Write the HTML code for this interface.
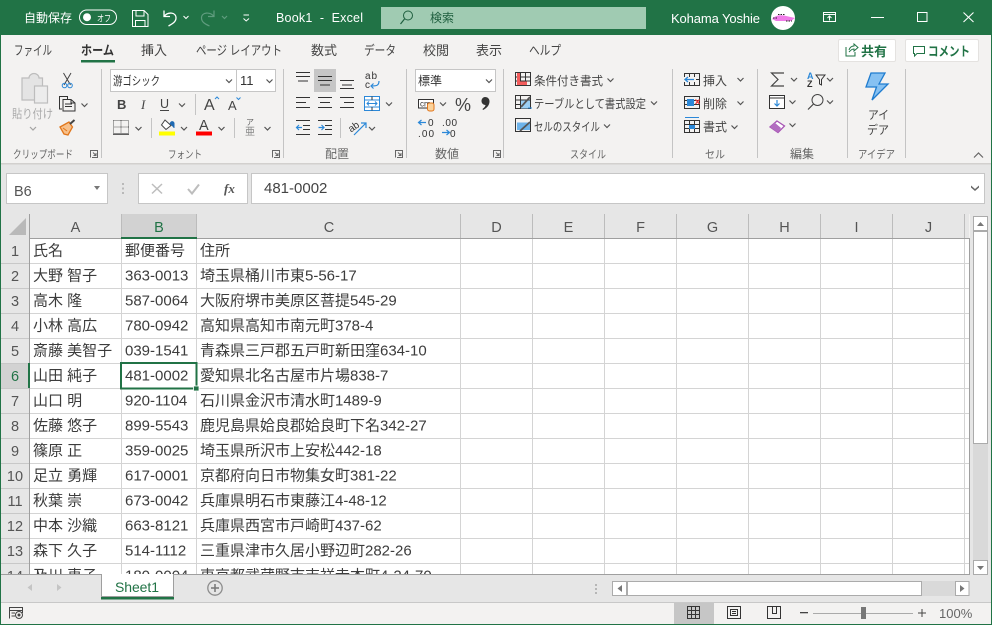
<!DOCTYPE html>
<html lang="ja"><head><meta charset="utf-8"><title>Book1 - Excel</title>
<style>
html,body{margin:0;padding:0;width:992px;height:625px;overflow:hidden;background:#fff}
svg{display:block}
text{font-family:"Liberation Sans","Noto Sans CJK JP",sans-serif;fill:#444;font-size:12px}
.t text{font-size:15px;fill:#3c3c3c}
.g text{font-size:11px;fill:#666}
.r text{font-size:12px;fill:#444}
.n text{font-size:14.5px;fill:#555;text-anchor:middle}
.tab text{font-size:13px;fill:#444}
</style></head><body>
<svg width="992" height="625" viewBox="0 0 992 625" xmlns="http://www.w3.org/2000/svg">
<defs><path id="c" d="M-3 -1.5L0 1.5L3 -1.5" fill="none" stroke="#555" stroke-width="1.2"/></defs>
<rect width="992" height="625" fill="#f3f2f1"/>
<!-- title bar -->
<rect width="992" height="35" fill="#217346"/>
<text x="24" y="22" style="fill:#fff;font-size:12px">自動保存</text>
<rect x="79.5" y="10" width="37" height="14.5" rx="7.2" fill="none" stroke="#fff"/>
<circle cx="87" cy="17.2" r="4" fill="#fff"/>
<text x="97" y="21.5" textLength="14" lengthAdjust="spacingAndGlyphs" style="fill:#fff;font-size:9px">オフ</text>
<g fill="none" stroke="#fff" stroke-width="1">
<path d="M132.5 10.500H144L148 14.500V26.500H132.500Z"/><path d="M136 10.500V16H144V10.500M135.500 26.500V20.500H145V26.500"/>
<path d="M164 10.500V16.500H170M164 16.500C168 11.500 176 12 176 18C176 22 172 24 168.500 26" stroke-width="1.3"/>
<path d="M183.500 16L186 18.500L188.500 16"/>
<path d="M243.500 15H249M243.500 18.500L246.200 21L249 18.500"/>
</g>
<g fill="none" stroke="#5f9c7e" stroke-width="1.2"><path d="M214 10.500V16.500H208M214 16.500C210 11.500 201.500 12 201.500 18C201.500 22 205 24 209.500 26"/><path d="M222 16L224.500 18.500L227 16"/></g>
<text x="276" y="22" textLength="87" style="fill:#fff;font-size:12.500px" xml:space="preserve">Book1  -  Excel</text>
<rect x="381" y="7" width="265" height="22" fill="#a0cbb2"/>
<circle cx="408" cy="15.500" r="4.500" fill="none" stroke="#1f5f3f"/><path d="M404.500 19L400.500 24" stroke="#1f5f3f" stroke-width="1.200"/>
<text x="430" y="22" style="fill:#1f5f3f;font-size:12px">検索</text>
<text x="671" y="23" textLength="89" style="fill:#fff;font-size:13px">Kohama Yoshie</text>
<circle cx="783" cy="18" r="12" fill="#fff"/>
<path d="M772 19C776 15 780 15 784 15.500L795 18L791 21H776Z" fill="#f07ae8"/><path d="M773 18H778M778 14.500H785M786 21H792" stroke="#222" stroke-dasharray="1.500 1"/>
<g fill="none" stroke="#fff"><rect x="823.500" y="12.500" width="12" height="9"/><path d="M823.500 14.500H835.500M829.500 20.500V16M827.500 18L829.500 16L831.500 18"/>
<path d="M871 17.500H884"/><rect x="917.500" y="12.500" width="9.500" height="9"/><path d="M963.500 12.500L973.500 22M973.500 12.500L963.500 22" stroke-width="1.100"/></g>
<!-- tabs -->
<g class="tab">
<text x="14" y="55" textLength="38" lengthAdjust="spacingAndGlyphs">ファイル</text>
<text x="81" y="55" textLength="33" lengthAdjust="spacingAndGlyphs" style="font-weight:bold;fill:#333">ホーム</text>
<text x="141" y="55">挿入</text>
<text x="196" y="55" textLength="86" lengthAdjust="spacingAndGlyphs">ページ レイアウト</text>
<text x="311" y="55">数式</text>
<text x="364" y="55" textLength="32" lengthAdjust="spacingAndGlyphs">データ</text>
<text x="423" y="55">校閲</text>
<text x="476" y="55">表示</text>
<text x="529" y="55" textLength="32" lengthAdjust="spacingAndGlyphs">ヘルプ</text>
</g>
<rect x="81" y="60" width="34" height="2.500" fill="#217346"/>
<rect x="838.500" y="39.500" width="57" height="22" rx="1.500" fill="#fff" stroke="#e4e2e0"/>
<rect x="905.500" y="39.500" width="73" height="22" rx="1.500" fill="#fff" stroke="#e4e2e0"/>
<path d="M846 47V56H855V52M849 50C850 47 852 46 854 46V44L858 47.500L854 51V49C852 49 851 50 849 52" fill="none" stroke="#217346"/>
<path d="M913.500 46.500H924.500V53.500H917L914.500 56V53.500H913.500Z" fill="none" stroke="#217346"/>
<text x="861" y="56" style="font-size:13px;font-weight:bold;fill:#217346">共有</text>
<text x="928" y="56" textLength="42" lengthAdjust="spacingAndGlyphs" style="font-size:13px;font-weight:bold;fill:#217346">コメント</text>
<!-- ribbon separators -->
<g fill="#c4c4c4"><rect x="101" y="69" width="1" height="89"/><rect x="283" y="69" width="1" height="89"/><rect x="406" y="69" width="1" height="89"/><rect x="503" y="69" width="1" height="89"/><rect x="672" y="69" width="1" height="89"/><rect x="757" y="69" width="1" height="89"/><rect x="847" y="69" width="1" height="89"/><rect x="905" y="69" width="1" height="89"/>
<rect x="195" y="94" width="1" height="21"/><rect x="151" y="118" width="1" height="20"/><rect x="234" y="118" width="1" height="20"/><rect x="340" y="118" width="1" height="20"/></g>
<!-- group labels -->
<g class="g">
<text x="13" y="158" textLength="60" lengthAdjust="spacingAndGlyphs">クリップボード</text>
<text x="168" y="158" textLength="34" lengthAdjust="spacingAndGlyphs">フォント</text>
<text x="325" y="158" style="font-size:12px">配置</text>
<text x="435" y="158" style="font-size:12px">数値</text>
<text x="570" y="158" textLength="36" lengthAdjust="spacingAndGlyphs">スタイル</text>
<text x="705" y="158" textLength="20" lengthAdjust="spacingAndGlyphs">セル</text>
<text x="790" y="158" style="font-size:12px">編集</text>
<text x="858" y="158" textLength="37" lengthAdjust="spacingAndGlyphs">アイデア</text>
</g>
<g fill="none" stroke="#666"><path d="M90.500 157.500V150.500H97.500V157.500H92M93 152.500L96 155.500M96 153V155.500H93.500"/>
<path d="M272.500 157.500V150.500H279.500V157.500H274M275 152.500L278 155.500M278 153V155.500H275.500"/>
<path d="M395.500 157.500V150.500H402.500V157.500H397M398 152.500L401 155.500M401 153V155.500H398.500"/>
<path d="M493.500 157.500V150.500H500.500V157.500H495M496 152.500L499 155.500M499 153V155.500H496.500"/>
<path d="M974 157.500L978.500 153L983 157.500" stroke-width="1.200"/></g>
<!-- clipboard -->
<g fill="#f3f2f1" stroke="#bdbdbd" stroke-width="1.200"><path d="M22 78H29C29 75 32 73.500 34 73.500C36 73.500 39 75 39 78H42.500V100H22Z" fill="#e4e4e4"/><rect x="34.500" y="86" width="13" height="17" fill="#ececec"/></g>
<text x="12" y="118" textLength="41" lengthAdjust="spacingAndGlyphs" style="fill:#aaa;font-size:12px">貼り付け</text>
<use href="#c" x="33" y="128.500" style="opacity:.5"/>
<path d="M63.500 73L70.500 85M71 73L64 85" stroke="#444" fill="none"/><circle cx="64.500" cy="85.500" r="2.300" fill="none" stroke="#2b88d8"/><circle cx="70" cy="85.500" r="2.300" fill="none" stroke="#2b88d8"/>
<path d="M62 109H59.500V96.500H67.500V99M63 99.500H71L75 103V111H63Z M71 99.500V103H75M65 104H72M65 106.500H72" fill="none" stroke="#333"/>
<use href="#c" x="84.500" y="105"/>
<path d="M60 127L69 122L72.500 127L68 135L64 134L60 127Z" fill="#f7c08a" stroke="#e1761b" stroke-width="1.300"/><path d="M70 124L74.500 120" stroke="#444" stroke-width="2"/><path d="M63 128L67 131" stroke="#e1761b"/>
<!-- font boxes -->
<rect x="110.500" y="69.500" width="126" height="22" fill="#fff" stroke="#c6c6c6"/><rect x="236.500" y="69.500" width="39" height="22" fill="#fff" stroke="#c6c6c6"/>
<text x="113" y="85" textLength="47" lengthAdjust="spacingAndGlyphs" style="font-size:12px;fill:#333">游ゴシック</text>
<text x="240" y="85" style="font-size:13px;fill:#333">11</text>
<use href="#c" x="229" y="81"/><use href="#c" x="269.500" y="81"/>
<text x="117" y="109" style="font-size:13px;font-weight:bold">B</text>
<text x="141" y="109" style="font-size:13px;font-style:italic;font-family:'Liberation Serif',serif">I</text>
<text x="160" y="108" style="font-size:12.500px">U</text><rect x="160" y="110" width="9" height="1" fill="#444"/>
<use href="#c" x="182" y="105"/>
<text x="204" y="110" style="font-size:16px">A</text><path d="M215 99L217 97L219 99" fill="none" stroke="#2b88d8"/>
<text x="228" y="110" style="font-size:13px">A</text><path d="M236.500 97.500L238.500 99.500L240.500 97.500" fill="none" stroke="#2b88d8"/>
<path d="M113.500 120.500H128.500V133M113.500 120.500V133M121 120.500V133M113.500 127H128.500" fill="none" stroke="#555" stroke-dasharray="1 1"/><rect x="113" y="133.500" width="16" height="1.200" fill="#222"/>
<use href="#c" x="138.500" y="128.500"/>
<path d="M165 120L161.500 125L166 129.500L171 125.500L165 120Z" fill="#fff" stroke="#444"/><path d="M170 124C171 121 173 121 174 123V128" fill="#1f6ab3" stroke="#1f6ab3"/>
<rect x="159" y="131.500" width="16" height="4" fill="#ffff00"/><use href="#c" x="184" y="128.500"/>
<text x="199" y="130" style="font-size:14.500px">A</text><rect x="196" y="131.500" width="16" height="4" fill="#f00"/><use href="#c" x="221.500" y="128.500"/>
<text x="246" y="125" style="font-size:8px;fill:#666">ア</text><text x="245" y="135" style="font-size:10px;fill:#888">亜</text><use href="#c" x="267.500" y="128.500"/>
<!-- alignment -->
<rect x="314" y="69" width="22" height="23" fill="#c6c6c6"/>
<g fill="none" stroke="#333"><path d="M296 72.500H310M296 76.500H310M298 81H308"/><path d="M318 76.500H332M318 80.500H332M320 85H330"/><path d="M340 80.500H354M342 85H352M340 88.500H354"/>
<path d="M296 97.500H310M296 102.500H306M296 107.500H310"/><path d="M318 97.500H332M320 102.500H330M318 107.500H332"/><path d="M340 97.500H354M344 102.500H354M340 107.500H354"/>
<path d="M296 120.500H310M303 125.500H310M303 129.500H310M296 134.500H310"/><path d="M318 120.500H332M325 125.500H332M325 129.500H332M318 134.500H332"/></g>
<text x="365" y="79" style="font-size:10px;fill:#333" textLength="12">ab</text><text x="365" y="88" style="font-size:10px;fill:#333">c</text>
<path d="M379 81C379 86 376 86 371 86M373.500 83.500L371 86L373.500 88.500" fill="none" stroke="#2b88d8" stroke-width="1.200"/>
<rect x="364.500" y="96.500" width="15" height="14" fill="#fff" stroke="#2b88d8"/><path d="M364.500 100H379.500M364.500 107H379.500M367 103.500H377M369 101.500L367 103.500L369 105.500M375 101.500L377 103.500L375 105.500" fill="none" stroke="#2b88d8"/><path d="M372 96.500V100M372 107V110.500" stroke="#333"/>
<use href="#c" x="389" y="104"/>
<path d="M296.500 127.500H302M299 125L296.500 127.500L299 130" fill="none" stroke="#2b88d8" stroke-width="1.200"/><path d="M318.500 127.500H324M321.500 125L324 127.500L321.500 130" fill="none" stroke="#2b88d8" stroke-width="1.200"/>
<text x="348" y="131" transform="rotate(-35 352 127)" style="font-size:10px;fill:#333" textLength="11">ab</text><path d="M354 135L366 123M361 123H366V128" fill="none" stroke="#2b88d8" stroke-width="1.200"/><use href="#c" x="372" y="128.500"/>
<!-- number -->
<rect x="415.500" y="69.500" width="80" height="22" fill="#fff" stroke="#c6c6c6"/><text x="418" y="85" style="font-size:12px;fill:#333">標準</text><use href="#c" x="489" y="81"/>
<rect x="418.500" y="99.500" width="15" height="8.500" fill="#fff" stroke="#333"/><text x="420" y="106.500" style="font-size:8px;fill:#333">cm</text><rect x="427.500" y="103" width="6.500" height="8" rx="2" fill="#fbd39c" stroke="#e1761b"/>
<use href="#c" x="443" y="104"/>
<text x="455" y="111" style="font-size:18px;fill:#444">%</text>
<path d="M485 97C488 97 489.500 99 489.500 101.500C489.500 105 487 108 483 110L482.500 109C484.500 107.500 485.500 106 485.500 105C483 105 481.500 103 481.500 101C481.500 99 483 97 485 97Z" fill="#333"/>
<path d="M426 122.500H419M421.500 120L418.500 122.500L421.500 125" fill="none" stroke="#2b88d8" stroke-width="1.200"/>
<text x="428" y="126" style="font-size:10px;fill:#333">0</text><text x="418" y="137" style="font-size:10px;fill:#333" textLength="16">.00</text>
<text x="442" y="126" style="font-size:10px;fill:#333" textLength="15">.00</text><text x="450" y="137" style="font-size:10px;fill:#333">0</text>
<path d="M442 132.500H449M446.500 130L449.500 132.500L446.500 135" fill="none" stroke="#2b88d8" stroke-width="1.200"/>
<!-- styles -->
<g fill="none" stroke="#333"><rect x="515.500" y="72.500" width="15" height="13"/><path d="M520.500 72.500V85.500M525.500 72.500V85.500M515.500 77H530.500M515.500 81H530.500"/>
<rect x="515.500" y="95.500" width="15" height="13"/><path d="M520.500 95.500V108.500M515.500 100H530.500M515.500 104.500H530.500"/>
<rect x="515.500" y="118.500" width="15" height="13"/></g>
<rect x="517" y="73" width="3" height="12" fill="#f25c5c"/><rect x="520" y="81.500" width="7" height="3.500" fill="#f25c5c"/><rect x="517" y="77.500" width="3" height="3" fill="#f25c5c"/>
<rect x="521" y="100.500" width="9" height="8" fill="#9bd0f5"/><path d="M521 107L530 97" stroke="#555" stroke-width="1.800"/><path d="M528 108H532" stroke="#2b88d8"/>
<path d="M517 122.500H530V130H517Z" fill="#6db3ea"/><path d="M520 131L530 122" stroke="#555" stroke-width="1.800"/>
<g class="r">
<text x="534" y="85" textLength="69" lengthAdjust="spacingAndGlyphs">条件付き書式</text>
<text x="534" y="108" textLength="112" lengthAdjust="spacingAndGlyphs">テーブルとして書式設定</text>
<text x="534" y="131" textLength="66" lengthAdjust="spacingAndGlyphs">セルのスタイル</text>
<text x="703" y="85">挿入</text><text x="703" y="108">削除</text><text x="703" y="131">書式</text>
</g>
<use href="#c" x="610.500" y="80"/><use href="#c" x="654" y="103"/><use href="#c" x="607" y="126"/>
<!-- cells -->
<g fill="none" stroke="#333"><rect x="684.500" y="73.500" width="15" height="12"/><path d="M689.500 73.500V85.500M694.500 73.500V85.500M684.500 79.500H699.500"/>
<rect x="684.500" y="96.500" width="15" height="12"/><path d="M684.500 100.500H699.500M684.500 104.500H699.500"/>
<rect x="684.500" y="120.500" width="15" height="12"/><path d="M689.500 120.500V132.500M694.500 120.500V132.500M684.500 124.500H699.500M684.500 128.500H699.500"/></g>
<rect x="684" y="77" width="12" height="5" fill="#f3f2f1"/><path d="M685 79.500H694M688 77L685 79.500L688 82" fill="none" stroke="#2b88d8" stroke-width="1.300"/>
<rect x="687" y="99" width="7" height="7" fill="#2b88d8"/><path d="M695.500 99.500L699.500 104M699.500 99.500L695.500 104" stroke="#e33" stroke-width="1.300"/>
<rect x="689" y="125" width="6" height="4" fill="#2b88d8"/><path d="M685 117.500H699" stroke="#2b88d8"/>
<use href="#c" x="740.500" y="79.500"/><use href="#c" x="740.500" y="103"/><use href="#c" x="734.500" y="127"/>
<!-- editing -->
<path d="M784 73H771.500L778 79.500L771.500 86H784" fill="none" stroke="#444" stroke-width="1.200"/><use href="#c" x="794" y="79.500"/>
<text x="807" y="79" style="font-size:9px;font-weight:bold;fill:#2b88d8">A</text><text x="807" y="87" style="font-size:9px;font-weight:bold;fill:#333">Z</text>
<path d="M816 75H825L821.500 79.500V85L819.500 84V79.500Z" fill="none" stroke="#333"/><use href="#c" x="830" y="79.500"/>
<rect x="769.500" y="95.500" width="15" height="13" fill="#fff" stroke="#333"/><path d="M769.500 98H784.500" stroke="#333"/><path d="M777 100V106M774.500 103.500L777 106L779.500 103.500" fill="none" stroke="#2b88d8" stroke-width="1.200"/><use href="#c" x="792.500" y="102"/>
<circle cx="817.500" cy="100" r="5.500" fill="none" stroke="#444"/><path d="M813.500 104L808 109.500" stroke="#444" stroke-width="1.200"/><use href="#c" x="830" y="102"/>
<path d="M777 121L784.500 126L778 132.500L770 127Z" fill="#fff" stroke="#a855b5" stroke-width="1.300"/><path d="M770 127L774.500 122.500L781 128L778 132.500Z" fill="#b26cc0"/><use href="#c" x="792.500" y="125"/>
<!-- ideas -->
<path d="M871 73H885L879 84H888L872 100L876.500 87H866Z" fill="#86c1f2" stroke="#1f7ccf" stroke-width="1.300"/>
<text x="868" y="119" textLength="21" lengthAdjust="spacingAndGlyphs" style="font-size:12px">アイ</text>
<text x="867" y="134" textLength="22" lengthAdjust="spacingAndGlyphs" style="font-size:12px">デア</text>
<!-- formula area -->
<rect y="163" width="992" height="1.500" fill="#d2d0ce"/>
<rect y="164.500" width="992" height="49.500" fill="#e6e6e6"/>
<rect x="6.500" y="173.500" width="101" height="30" fill="#fff" stroke="#c6c6c6"/>
<text x="14" y="196" style="font-size:14.500px;fill:#555">B6</text><path d="M94 186H100L97 190Z" fill="#777"/>
<path d="M123 183V185M123 187.500V189.500M123 192V194" stroke="#aaa" stroke-width="1.500"/>
<rect x="138.500" y="173.500" width="109" height="30" fill="#fff" stroke="#c6c6c6"/>
<rect x="251.500" y="173.500" width="733" height="30" fill="#fff" stroke="#c6c6c6"/>
<path d="M152 184L162 193.500M162 184L152 193.500" stroke="#bdbdbd" stroke-width="1.500"/>
<path d="M188 189L192 193.500L199 184.500" fill="none" stroke="#bdbdbd" stroke-width="2"/>
<text x="224" y="193" style="font-size:13px;font-style:italic;font-weight:bold;font-family:'Liberation Serif',serif;fill:#555">fx</text>
<text x="264" y="193" style="font-size:15px;fill:#444">481-0002</text>
<path d="M971 185.500L975 189L979 185.500L979 187.500L975 191L971 187.500Z" fill="#666"/>
<!-- sheet -->
<rect x="1" y="214" width="968" height="24" fill="#e6e6e6"/><rect x="1" y="238" width="28" height="336" fill="#e6e6e6"/>
<rect x="970" y="214" width="21" height="361" fill="#e6e6e6"/>
<rect x="121.500" y="214" width="75" height="24" fill="#d2d2d2"/><rect x="1" y="363" width="28" height="25" fill="#d2d2d2"/>
<path d="M26 218V235H9Z" fill="#b9b9b9"/>
<rect x="30" y="238.500" width="939" height="336" fill="#fff"/>
<g stroke="#d4d4d4" fill="none">
<path d="M121.500 238V574M196.500 238V574M460.500 238V574M532.500 238V574M604.500 238V574M676.500 238V574M748.500 238V574M820.500 238V574M892.500 238V574M964.500 238V574"/>
<path d="M30 263.500H969M30 288.500H969M30 313.500H969M30 338.500H969M30 363.500H969M30 388.500H969M30 413.500H969M30 438.500H969M30 463.500H969M30 488.500H969M30 513.500H969M30 538.500H969M30 563.500H969"/>
<path d="M1 263.500H29M1 288.500H29M1 313.500H29M1 338.500H29M1 363.500H29M1 388.500H29M1 413.500H29M1 438.500H29M1 463.500H29M1 488.500H29M1 513.500H29M1 538.500H29M1 563.500H29" stroke="#c8c8c8"/>
<path d="M121.500 214V238M196.500 214V238M460.500 214V238M532.500 214V238M604.500 214V238M676.500 214V238M748.500 214V238M820.500 214V238M892.500 214V238M964.500 214V238" stroke="#bcbcbc"/>
</g>
<path d="M29.500 214V574M29 238.500H969.500V574" fill="none" stroke="#9f9f9f"/>
<rect x="121" y="237" width="76" height="2" fill="#217346"/><rect x="28" y="363" width="2" height="25" fill="#217346"/>
<g class="n">
<text x="75.500" y="232">A</text><text x="159" y="232" style="fill:#217346">B</text><text x="329" y="232">C</text><text x="496.500" y="232">D</text><text x="568.500" y="232">E</text><text x="640.500" y="232">F</text><text x="712.500" y="232">G</text><text x="784.500" y="232">H</text><text x="856.500" y="232">I</text><text x="928.500" y="232">J</text>
<text x="15" y="256">1</text><text x="15" y="281">2</text><text x="15" y="306">3</text><text x="15" y="331">4</text><text x="15" y="356">5</text><text x="15" y="381" style="fill:#217346">6</text><text x="15" y="406">7</text><text x="15" y="431">8</text><text x="15" y="456">9</text><text x="15" y="481">10</text><text x="15" y="506">11</text><text x="15" y="531">12</text><text x="15" y="556">13</text><text x="15" y="581">14</text>
</g>
<g class="t">
<text x="33" y="255.500">氏名</text><text x="125" y="255.500">郵便番号</text><text x="200" y="255.500">住所</text>
<text x="33" y="280.500">大野 智子</text><text x="125" y="280.500">363-0013</text><text x="200" y="280.500">埼玉県桶川市東5-56-17</text>
<text x="33" y="305.500">高木 隆</text><text x="125" y="305.500">587-0064</text><text x="200" y="305.500">大阪府堺市美原区菩提545-29</text>
<text x="33" y="330.500">小林 高広</text><text x="125" y="330.500">780-0942</text><text x="200" y="330.500">高知県高知市南元町378-4</text>
<text x="33" y="355.500">斎藤 美智子</text><text x="125" y="355.500">039-1541</text><text x="200" y="355.500">青森県三戸郡五戸町新田窪634-10</text>
<text x="33" y="380.500">山田 純子</text><text x="125" y="380.500">481-0002</text><text x="200" y="380.500">愛知県北名古屋市片場838-7</text>
<text x="33" y="405.500">山口 明</text><text x="125" y="405.500">920-1104</text><text x="200" y="405.500">石川県金沢市清水町1489-9</text>
<text x="33" y="430.500">佐藤 悠子</text><text x="125" y="430.500">899-5543</text><text x="200" y="430.500">鹿児島県姶良郡姶良町下名342-27</text>
<text x="33" y="455.500">篠原 正</text><text x="125" y="455.500">359-0025</text><text x="200" y="455.500">埼玉県所沢市上安松442-18</text>
<text x="33" y="480.500">足立 勇輝</text><text x="125" y="480.500">617-0001</text><text x="200" y="480.500">京都府向日市物集女町381-22</text>
<text x="33" y="505.500">秋葉 崇</text><text x="125" y="505.500">673-0042</text><text x="200" y="505.500">兵庫県明石市東藤江4-48-12</text>
<text x="33" y="530.500">中本 沙織</text><text x="125" y="530.500">663-8121</text><text x="200" y="530.500">兵庫県西宮市戸崎町437-62</text>
<text x="33" y="555.500">森下 久子</text><text x="125" y="555.500">514-1112</text><text x="200" y="555.500">三重県津市久居小野辺町282-26</text>
<text x="33" y="580.500">及川 恵子</text><text x="125" y="580.500">180-0004</text><text x="200" y="580.500">東京都武蔵野市吉祥寺本町4-24-70</text>
</g>
<rect x="121" y="363" width="75.500" height="25.500" fill="none" stroke="#217346" stroke-width="2"/><rect x="193.500" y="386" width="5.500" height="5" fill="#217346" stroke="#fff" stroke-width=".8"/>
<!-- v scrollbar -->
<rect x="973" y="217" width="15" height="357" fill="#d9d9d9"/>
<rect x="973.500" y="216.500" width="14" height="14" fill="#fff" stroke="#ababab"/><path d="M977 226H984L980.500 222Z" fill="#777"/>
<rect x="973.500" y="231.500" width="14" height="212" fill="#fff" stroke="#ababab"/>
<rect x="973.500" y="560.500" width="14" height="14" fill="#fff" stroke="#ababab"/><path d="M977 566H984L980.500 570Z" fill="#777"/>
<!-- tab bar -->
<rect x="1" y="575" width="990" height="27" fill="#e6e6e6"/><rect x="1" y="574" width="969" height="1" fill="#9f9f9f"/><rect x="1" y="602" width="990" height="1" fill="#c8c8c8"/>
<path d="M32 584V591L27.500 587.500Z" fill="#c4c4c4"/><path d="M57 584V591L61.500 587.500Z" fill="#c4c4c4"/>
<rect x="101.500" y="574.500" width="72" height="22" fill="#fff" stroke="#9f9f9f"/><rect x="101" y="597" width="73" height="2.500" fill="#217346"/><rect x="102" y="574" width="71" height="1" fill="#fff"/>
<text x="115" y="592" textLength="44" style="font-size:14px;fill:#217346">Sheet1</text>
<circle cx="215" cy="588" r="7.200" fill="none" stroke="#8c8c8c" stroke-width="1.300"/><path d="M215 584V592M211 588H219" stroke="#777" stroke-width="1.500"/>
<path d="M596 584V586M596 588V590M596 592V594" stroke="#aaa" stroke-width="1.600"/>
<rect x="612" y="581" width="357" height="15" fill="#d9d9d9" stroke="none"/>
<rect x="612.500" y="581.500" width="14" height="14" fill="#fff" stroke="#ababab"/><path d="M622 585V592L617.500 588.500Z" fill="#777"/>
<rect x="627.500" y="581.500" width="294" height="14" fill="#fff" stroke="#ababab"/>
<rect x="955.500" y="581.500" width="13.500" height="14" fill="#fff" stroke="#ababab"/><path d="M960 585V592L964.500 588.500Z" fill="#777"/>
<!-- status -->
<rect x="1" y="603" width="990" height="21" fill="#f3f2f1"/>
<rect x="674" y="603" width="40" height="21" fill="#c6c6c6"/>
<g fill="none" stroke="#444"><path d="M9.500 618.500V607.500H22.500V613M9.500 610.500H22.500M11.500 613H15M11.500 616H15"/><circle cx="19" cy="615" r="3.500"/></g><circle cx="19" cy="615" r="1.500" fill="#444"/>
<g fill="none" stroke="#333"><rect x="687.500" y="606.500" width="12" height="12"/><path d="M691.500 606.500V618.500M695.500 606.500V618.500M687.500 610.500H699.500M687.500 614.500H699.500"/>
<rect x="727.500" y="606.500" width="13" height="12"/><rect x="730.500" y="609.500" width="7" height="6"/><path d="M732 611.500H736M732 613.500H736"/>
<rect x="767.500" y="606.500" width="13" height="12"/><path d="M772.500 606.500V613.500H776.500V606.500"/></g>
<rect x="800" y="612" width="8" height="1.300" fill="#444"/><rect x="813" y="613" width="100" height="1" fill="#aaa"/><rect x="861" y="607" width="5" height="12" fill="#777"/>
<path d="M918 613H926M922 609V617" stroke="#444"/>
<text x="939" y="618" style="font-size:13px;fill:#666">100%</text>
<!-- window edges -->
<rect x="0" y="35" width="1" height="590" fill="#217346"/><rect x="991" y="35" width="1" height="590" fill="#217346"/><rect y="624" width="992" height="1" fill="#217346"/>
</svg>
</body></html>
